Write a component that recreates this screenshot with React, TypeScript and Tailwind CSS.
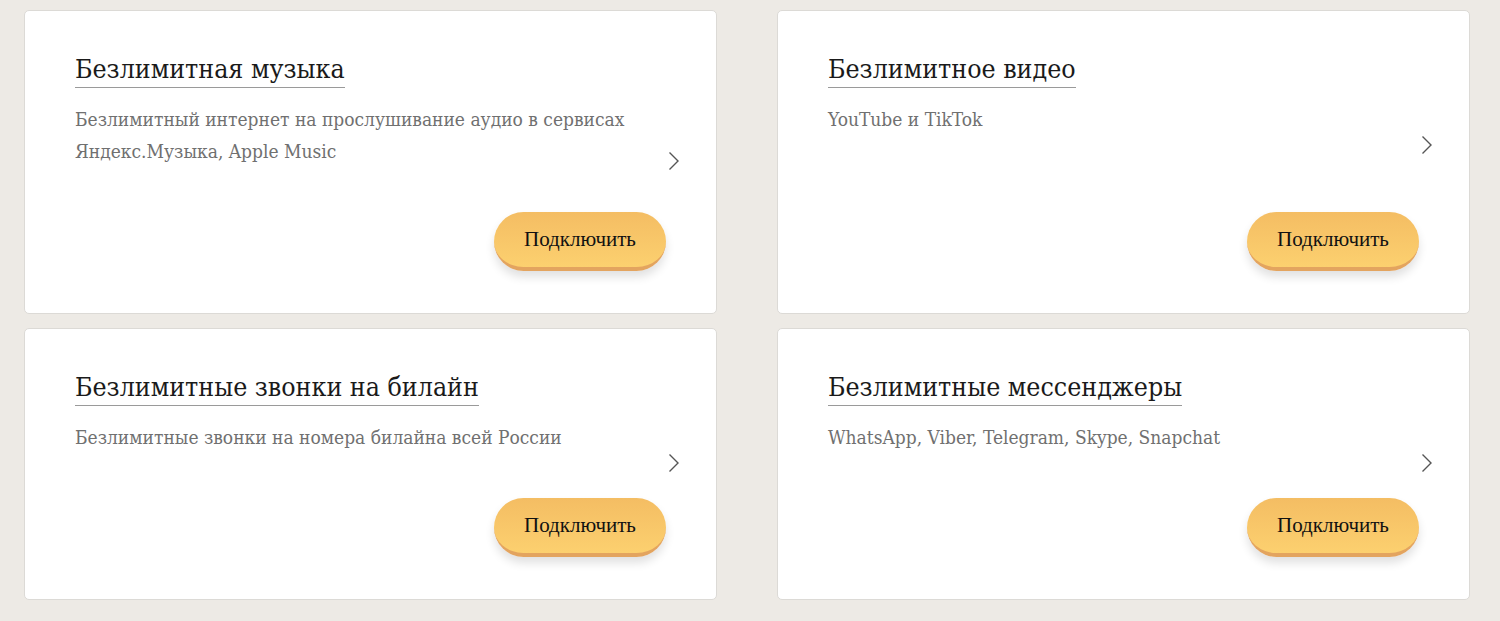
import React from 'react';

interface Option {
  title: string;
  text: string;
}

const options: Option[] = [
  {
    title: 'Безлимитная музыка',
    text: 'Безлимитный интернет на прослушивание аудио в сервисах Яндекс.Музыка, Apple Music',
  },
  { title: 'Безлимитное видео', text: 'YouTube и TikTok' },
  { title: 'Безлимитные звонки на билайн', text: 'Безлимитные звонки на номера билайна всей России' },
  { title: 'Безлимитные мессенджеры', text: 'WhatsApp, Viber, Telegram, Skype, Snapchat' },
];

const Chevron = () => (
  <svg width="12" height="20" viewBox="0 0 12 20" fill="none" className="text-[#555] translate-y-[51px]">
    <path d="M1.5 1.5L10 10L1.5 18.5" stroke="currentColor" strokeWidth="1.4" />
  </svg>
);

const OptionCard: React.FC<{ option: Option }> = ({ option }) => (
  <div className="flex flex-col bg-white border border-[#dcdad6] rounded-[5px] pl-[50px] pr-[36px] pt-[41px] pb-[42px]">
    <div className="flex items-center">
      <div className="flex-1 pr-[30px]">
        <h3 className="inline-block text-[26.5px] leading-[34px] text-[#1a1a1a] border-b border-[#9a9a9a] pb-[1px] font-['DejaVu_Serif_Condensed',serif] font-normal">
          {option.title}
        </h3>
        <p className="mt-[15px] text-[19px] leading-[32px] text-[#707070] font-['DejaVu_Serif_Condensed',serif]">
          {option.text}
        </p>
      </div>
      <Chevron />
    </div>
    <div className="flex-1 flex items-end justify-end pt-[45px] pr-[14px]">
      <button className="h-[59px] w-[172px] rounded-full bg-gradient-to-b from-[#f4bd63] to-[#fcd06f] border-b-[4px] border-[#e3a45f] shadow-[0_6px_10px_rgba(0,0,0,0.12)] text-[21px] text-[#111] font-['Liberation_Serif',serif]">
        Подключить
      </button>
    </div>
  </div>
);

export default function App() {
  return (
    <div className="min-h-[621px] bg-[#edeae5] px-[24px] pt-[10px] pb-[20px]">
      <div className="grid grid-cols-2 gap-x-[60px] gap-y-[14px] w-[1446px]">
        {options.map((o) => (
          <OptionCard key={o.title} option={o} />
        ))}
      </div>
    </div>
  );
}
